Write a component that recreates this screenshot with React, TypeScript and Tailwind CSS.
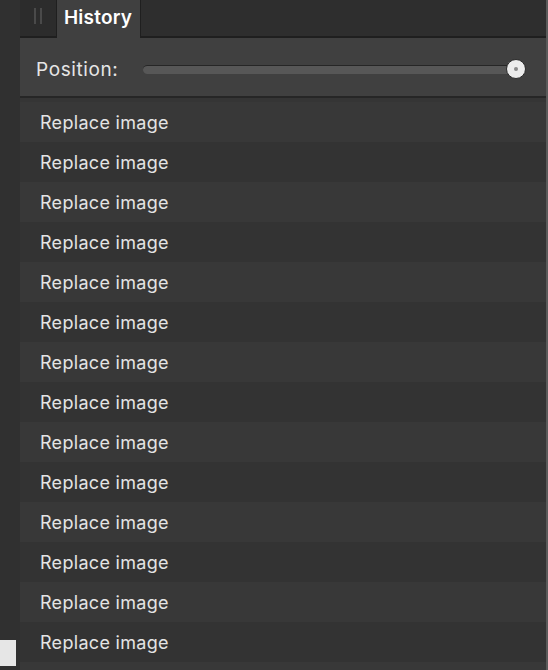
const ROWS = Array.from({ length: 14 }, () => "Replace image");

export default function App() {
  return (
    <div className="flex h-[670px] w-[548px] overflow-hidden bg-[#303030] font-['Inter','Noto_Sans',sans-serif] text-[#e4e4e4]">
      {/* left gutter */}
      <div className="relative w-5 shrink-0">
        <div className="absolute left-0 top-[640px] h-[26px] w-4 bg-[#e6e6e6]" />
      </div>

      <div className="flex min-w-0 flex-1 flex-col">
        {/* tab bar */}
        <div className="flex h-[38px] shrink-0">
          <div className="flex w-[37px] items-start justify-center gap-[4px] border-b-2 border-r border-[#1f1f1f] bg-[#2c2c2c] pt-[8px]">
            <div className="h-[16px] w-[2px] bg-[#4a4a4a]" />
            <div className="h-[16px] w-[2px] bg-[#4a4a4a]" />
          </div>
          <div className="flex w-[83px] items-center bg-[#404040] pb-[1px] pl-[7px] text-[19px] font-semibold tracking-[0.2px] text-white">History</div>
          <div className="flex-1 border-b-2 border-l border-[#1f1f1f] bg-[#2e2e2e]" />
        </div>

        {/* position slider */}
        <div className="flex h-[60px] shrink-0 items-center border-b-2 border-[#262626] bg-[#404040] pl-[16px] pr-[26px] pt-[4px]">
          <span className="w-[107px] pt-[2px] text-[19px] tracking-[0.6px] text-[#e6e6e6]">Position:</span>
          <div className="relative flex flex-1 items-center">
            <div className="h-[9px] w-full rounded-full border-t border-[#262626] bg-[#575757]" />
            <div className="absolute right-[-6px] top-1/2 flex h-[20px] w-[20px] -translate-y-1/2 items-center justify-center rounded-full border border-[#2a2a2a] bg-[#ececec]">
              <div className="h-[4px] w-[4px] rounded-full bg-[#8a8a8a]" />
            </div>
          </div>
        </div>

        <div className="h-1 shrink-0 bg-[#353535]" />

        {/* history list */}
        <div className="flex flex-col">
          {ROWS.map((label, i) => (
            <div
              key={i}
              className={`flex h-10 shrink-0 items-center pl-5 text-[18px] tracking-[0.3px] ${i % 2 === 0 ? "bg-[#383838]" : "bg-[#333333]"}`}
            >
              {label}
            </div>
          ))}
          <div className="h-10 shrink-0 bg-[#383838]" />
        </div>
      </div>

      {/* right edge */}
      <div className="w-[2px] shrink-0 bg-[#5a5a5a]" />
    </div>
  );
}
